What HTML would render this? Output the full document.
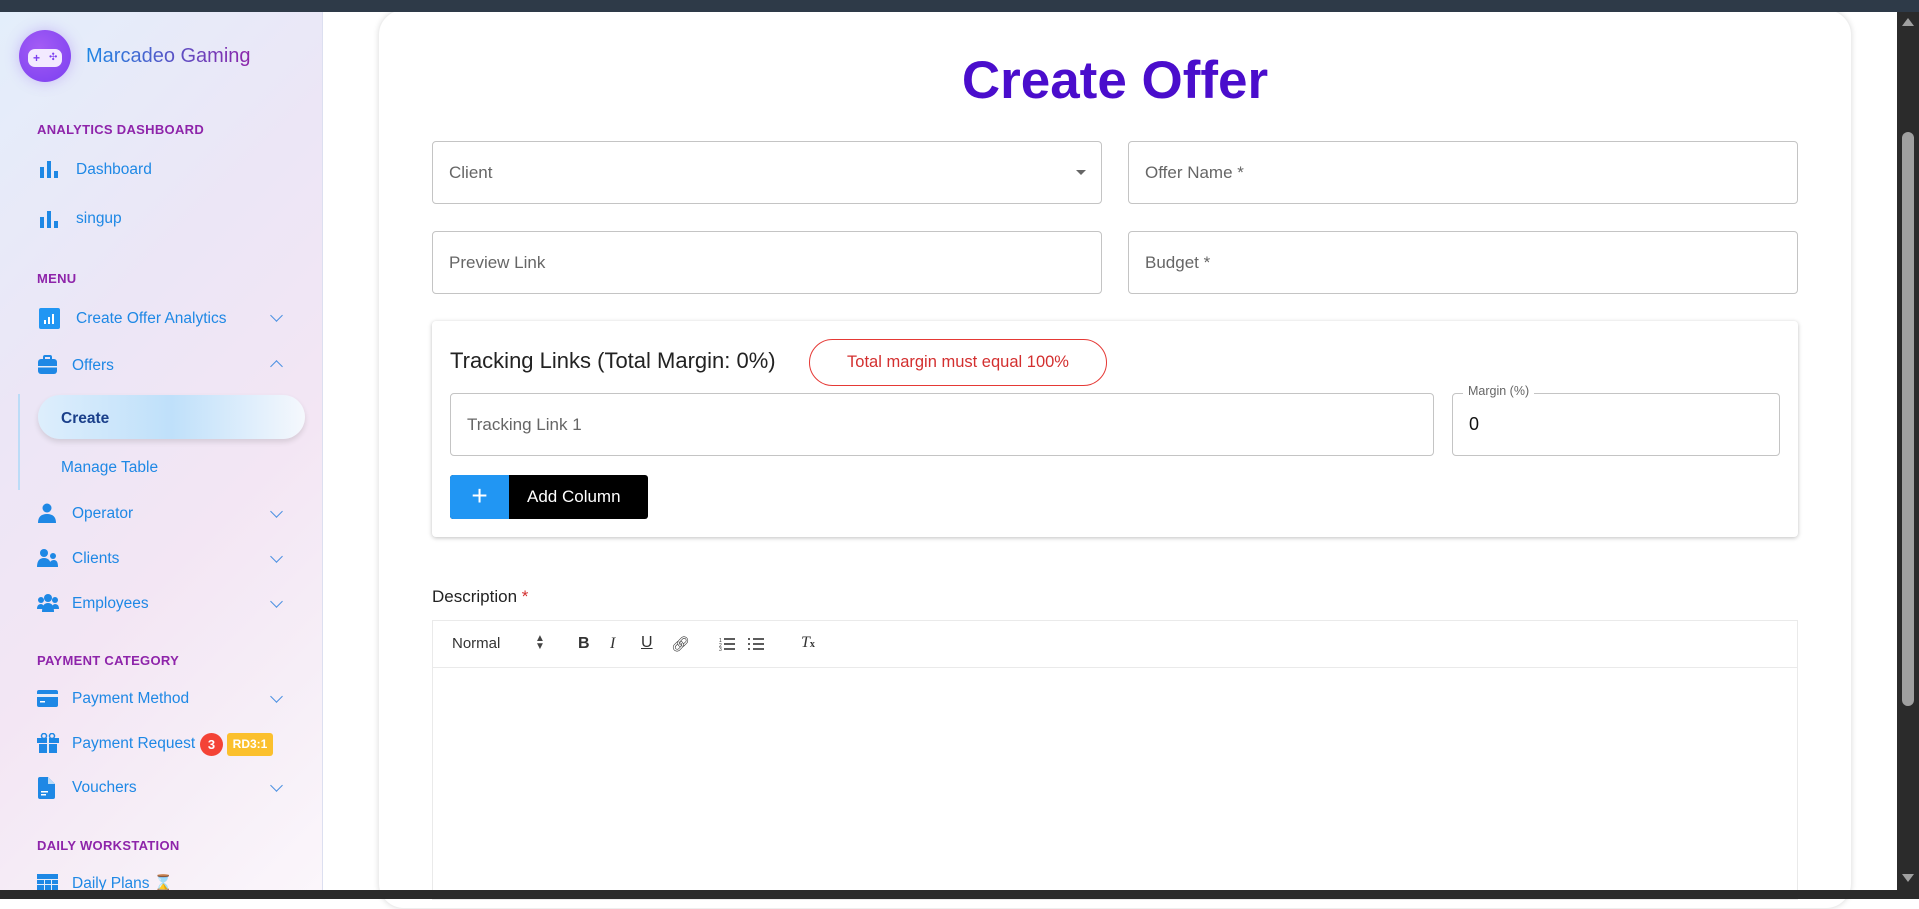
<!DOCTYPE html>
<html><head><meta charset="utf-8"><style>
*{box-sizing:border-box;margin:0;padding:0}
body{width:1919px;height:899px;overflow:hidden;position:relative;background:#fff;font-family:"Liberation Sans",Arial,sans-serif}
.a{position:absolute}
.topbar{left:0;top:0;width:1919px;height:12px;background:#2e3a48}
.botbar{left:0;top:890px;width:1919px;height:9px;background:#2b2b2b}
.side{left:0;top:12px;width:323px;height:878px;background:linear-gradient(135deg,#e3eefb 0%,#ece6f6 35%,#f3e6f4 60%,#f6eef7 80%,#fbf6fb 100%);border-right:1px solid #dcdff0}
.sec{left:37px;font-size:13px;font-weight:bold;color:#8e24aa;letter-spacing:.3px}
.it{font-size:15.5px;color:#1e88e5;font-weight:500;margin-top:2px}
.chev{width:9px;height:9px;border-right:1.5px solid #4a90e2;border-bottom:1.5px solid #4a90e2;transform:rotate(45deg)}
.card{left:378px;top:9px;width:1474px;height:900px;background:#fff;border-radius:26px;box-shadow:0 0 6px rgba(0,0,0,.12);border:1px solid #eee}
.fld{border:1px solid #c4c4c4;border-radius:4px;background:#fff}
.ph{font-size:17px;color:#666;position:absolute;left:16px;top:50%;transform:translateY(-50%)}
.scr{left:1897px;top:12px;width:22px;height:878px;background:#2b2b2b}
</style></head><body>
<div class="a side"></div>
<!-- logo -->
<div class="a" style="left:19px;top:30px;width:52px;height:52px;border-radius:50%;background:radial-gradient(circle at 40% 35%,#a35cf5,#7b3ff0);box-shadow:0 0 14px rgba(140,90,240,.35)"></div>
<div class="a" style="left:28px;top:49px;width:34px;height:18px;border-radius:7px;background:#f3eaff"></div>
<div class="a" style="left:33px;top:51px;font-size:12px;color:#7b3ff0;font-weight:bold">+</div>
<div class="a" style="left:49px;top:52px;font-size:10px;color:#7b3ff0">✣</div>
<div class="a" style="left:86px;top:45px;font-size:20px;font-weight:500;background:linear-gradient(90deg,#1e88e5,#8e24aa);-webkit-background-clip:text;color:transparent">Marcadeo Gaming</div>

<div class="a sec" style="top:122px">ANALYTICS DASHBOARD</div>
<svg class="a" style="left:39px;top:159px" width="20" height="19"><rect x="1" y="8" width="4" height="11" fill="#1e88e5"/><rect x="8" y="2" width="4" height="17" fill="#1e88e5"/><rect x="15" y="12" width="4" height="7" fill="#1e88e5"/></svg>
<div class="a it" style="left:76px;top:159px">Dashboard</div>
<svg class="a" style="left:39px;top:209px" width="20" height="19"><rect x="1" y="8" width="4" height="11" fill="#1e88e5"/><rect x="8" y="2" width="4" height="17" fill="#1e88e5"/><rect x="15" y="12" width="4" height="7" fill="#1e88e5"/></svg>
<div class="a it" style="left:76px;top:208px">singup</div>

<div class="a sec" style="top:271px">MENU</div>
<svg class="a" style="left:39px;top:308px" width="21" height="21"><rect width="21" height="21" rx="2" fill="#2196f3"/><rect x="5" y="12" width="2" height="4" fill="#fff"/><rect x="9" y="9" width="2" height="7" fill="#fff"/><rect x="13" y="6" width="2" height="10" fill="#fff"/></svg>
<div class="a it" style="left:76px;top:308px">Create Offer Analytics</div>
<div class="a chev" style="left:272px;top:311px"></div>
<svg class="a" style="left:37px;top:355px" width="21" height="20"><rect x="7" y="1" width="7" height="4" rx="1" fill="none" stroke="#1e88e5" stroke-width="2"/><rect x="1" y="4" width="19" height="15" rx="3" fill="#1e88e5"/><rect x="1" y="11" width="19" height="1.5" fill="#e6ecf8"/></svg>
<div class="a it" style="left:72px;top:355px">Offers</div>
<div class="a chev" style="left:272px;top:362px;transform:rotate(-135deg)"></div>
<div class="a" style="left:18px;top:394px;width:2px;height:96px;background:#bcdcf7"></div>
<div class="a" style="left:38px;top:395px;width:267px;height:44px;border-radius:22px;background:linear-gradient(90deg,#ddeefc,#bfe0fa 50%,#f5f8fd);box-shadow:0 3px 6px rgba(0,0,0,.12)"></div>
<div class="a" style="left:61px;top:410px;font-size:15.5px;font-weight:bold;color:#1a3f8a">Create</div>
<div class="a it" style="left:61px;top:457px">Manage Table</div>

<svg class="a" style="left:38px;top:503px" width="18" height="21"><circle cx="9" cy="5" r="4.5" fill="#1e88e5"/><path d="M0 20 Q0 11 9 11 Q18 11 18 20 Z" fill="#1e88e5"/></svg>
<div class="a it" style="left:72px;top:503px">Operator</div>
<div class="a chev" style="left:272px;top:507px"></div>
<svg class="a" style="left:37px;top:548px" width="22" height="20"><circle cx="7" cy="5" r="4" fill="#1e88e5"/><path d="M0 19 Q0 10 7 10 Q14 10 14 19Z" fill="#1e88e5"/><circle cx="16" cy="8" r="3" fill="#1e88e5"/><path d="M12 19 Q12 12 17 12 Q21 12 21 19Z" fill="#1e88e5"/></svg>
<div class="a it" style="left:72px;top:548px">Clients</div>
<div class="a chev" style="left:272px;top:552px"></div>
<svg class="a" style="left:37px;top:593px" width="22" height="20"><circle cx="11" cy="5" r="4" fill="#1e88e5"/><circle cx="4" cy="7" r="3" fill="#1e88e5"/><circle cx="18" cy="7" r="3" fill="#1e88e5"/><path d="M5 19 Q5 10 11 10 Q17 10 17 19Z" fill="#1e88e5"/><path d="M0 16 Q0 11 4 11 Q7 11 7 16Z" fill="#1e88e5"/><path d="M15 16 Q15 11 18 11 Q22 11 22 16Z" fill="#1e88e5"/></svg>
<div class="a it" style="left:72px;top:593px">Employees</div>
<div class="a chev" style="left:272px;top:597px"></div>

<div class="a sec" style="top:653px">PAYMENT CATEGORY</div>
<svg class="a" style="left:37px;top:690px" width="21" height="17"><rect width="21" height="17" rx="2" fill="#1e88e5"/><rect y="4" width="21" height="3" fill="#e6ecf8"/><rect x="3" y="11" width="5" height="1.5" fill="#fff"/></svg>
<div class="a it" style="left:72px;top:688px">Payment Method</div>
<div class="a chev" style="left:272px;top:692px"></div>
<svg class="a" style="left:37px;top:733px" width="22" height="20"><rect x="0" y="5" width="22" height="5" fill="#1e88e5"/><rect x="2" y="11" width="18" height="9" fill="#1e88e5"/><rect x="10" y="5" width="2" height="15" fill="#e6ecf8"/><circle cx="7" cy="3" r="2.5" fill="none" stroke="#1e88e5" stroke-width="1.5"/><circle cx="15" cy="3" r="2.5" fill="none" stroke="#1e88e5" stroke-width="1.5"/></svg>
<div class="a it" style="left:72px;top:733px">Payment Request</div>
<div class="a" style="left:200px;top:733px;width:23px;height:23px;border-radius:50%;background:#f44336;color:#fff;font-size:13px;font-weight:bold;text-align:center;line-height:23px">3</div>
<div class="a" style="left:227px;top:733px;width:46px;height:23px;border-radius:3px;background:#fbc02d;color:#fff;font-size:12px;font-weight:bold;text-align:center;line-height:23px">RD3:1</div>
<svg class="a" style="left:38px;top:777px" width="17" height="22"><path d="M0 2 Q0 0 2 0 L10 0 L17 7 L17 20 Q17 22 15 22 L2 22 Q0 22 0 20Z" fill="#1e88e5"/><path d="M10 0 L10 7 L17 7" fill="#bcdcf7"/><rect x="3" y="14" width="7" height="1.5" fill="#fff"/><rect x="3" y="17" width="5" height="1.5" fill="#fff"/></svg>
<div class="a it" style="left:72px;top:777px">Vouchers</div>
<div class="a chev" style="left:272px;top:781px"></div>

<div class="a sec" style="top:838px">DAILY WORKSTATION</div>
<svg class="a" style="left:37px;top:874px" width="21" height="16"><rect width="21" height="16" fill="#1e88e5"/><g fill="#e6ecf8"><rect x="0" y="5" width="21" height="1"/><rect x="0" y="10" width="21" height="1"/><rect x="7" y="5" width="1" height="11"/><rect x="14" y="5" width="1" height="11"/></g></svg>
<div class="a it" style="left:72px;top:872px">Daily Plans ⌛</div>

<!-- main card -->
<div class="a card"></div>
<div class="a" style="left:378px;top:50px;width:1474px;text-align:center;font-size:53px;font-weight:bold;color:#4a0dcc">Create Offer</div>

<div class="a fld" style="left:432px;top:141px;width:670px;height:63px"><span class="ph">Client</span><span style="position:absolute;right:15px;top:28px;border-left:5px solid transparent;border-right:5px solid transparent;border-top:5px solid #666"></span></div>
<div class="a fld" style="left:1128px;top:141px;width:670px;height:63px"><span class="ph">Offer Name *</span></div>
<div class="a fld" style="left:432px;top:231px;width:670px;height:63px"><span class="ph">Preview Link</span></div>
<div class="a fld" style="left:1128px;top:231px;width:670px;height:63px"><span class="ph">Budget *</span></div>

<div class="a" style="left:432px;top:321px;width:1366px;height:216px;background:#fff;border-radius:4px;box-shadow:0 1px 4px rgba(0,0,0,.25)"></div>
<div class="a" style="left:450px;top:348px;font-size:22px;font-weight:500;color:#222">Tracking Links (Total Margin: 0%)</div>
<div class="a" style="left:809px;top:339px;width:298px;height:47px;border:1.5px solid #e53935;border-radius:24px;color:#d32f2f;font-size:16.5px;font-weight:500;text-align:center;line-height:44px">Total margin must equal 100%</div>
<div class="a fld" style="left:450px;top:393px;width:984px;height:63px"><span class="ph">Tracking Link 1</span></div>
<div class="a fld" style="left:1452px;top:393px;width:328px;height:63px"><span style="position:absolute;left:16px;top:20px;font-size:18px;color:#111">0</span></div>
<div class="a" style="left:1463px;top:384px;padding:0 5px;background:#fff;font-size:12.5px;color:#666">Margin (%)</div>
<div class="a" style="left:450px;top:475px;width:198px;height:44px;border-radius:3px;background:#000;overflow:hidden">
 <div style="position:absolute;left:0;top:0;width:59px;height:44px;background:#2196f3;color:#fff;font-size:28px;text-align:center;line-height:42px">+</div>
 <div style="position:absolute;left:77px;top:12px;color:#fff;font-size:17px;font-weight:500">Add Column</div>
</div>

<div class="a" style="left:432px;top:587px;font-size:17px;color:#222">Description <span style="color:#d32f2f">*</span></div>
<div class="a" style="left:432px;top:620px;width:1366px;height:280px;border:1px solid #eaeaea"></div>
<div class="a" style="left:432px;top:667px;width:1366px;height:1px;background:#eaeaea"></div>
<div class="a" style="left:452px;top:635px;font-size:15px;color:#333">Normal</div>
<div class="a" style="left:535px;top:635px;font-size:10px;color:#444;line-height:8px">▲<br>▼</div>
<div class="a" style="left:578px;top:635px;font-size:16px;font-weight:bold;color:#333">B</div>
<div class="a" style="left:610px;top:635px;font-size:16px;font-style:italic;color:#333;font-family:'Liberation Serif',serif">I</div>
<div class="a" style="left:641px;top:634px;font-size:16px;text-decoration:underline;color:#333">U</div>
<div class="a" style="left:671px;top:635px;font-size:15px;color:#333">🔗︎</div>
<svg class="a" style="left:719px;top:637px" width="16" height="14"><g stroke="#333" stroke-width="1.6"><line x1="5" y1="2" x2="16" y2="2"/><line x1="5" y1="7" x2="16" y2="7"/><line x1="5" y1="12" x2="16" y2="12"/></g><text x="0" y="5" font-size="5" fill="#333">1</text><text x="0" y="10" font-size="5" fill="#333">2</text><text x="0" y="14" font-size="5" fill="#333">3</text></svg>
<svg class="a" style="left:748px;top:637px" width="16" height="14"><g stroke="#333" stroke-width="1.6"><line x1="5" y1="2" x2="16" y2="2"/><line x1="5" y1="7" x2="16" y2="7"/><line x1="5" y1="12" x2="16" y2="12"/><line x1="0" y1="2" x2="2" y2="2"/><line x1="0" y1="7" x2="2" y2="7"/><line x1="0" y1="12" x2="2" y2="12"/></g></svg>
<div class="a" style="left:801px;top:634px;font-size:16px;font-style:italic;color:#333;font-family:'Liberation Serif',serif">T<span style="font-size:10px;font-style:normal;font-weight:bold">x</span></div>

<!-- scrollbar -->
<div class="a scr"></div>
<div class="a" style="left:1902px;top:18px;border-left:6px solid transparent;border-right:6px solid transparent;border-bottom:8px solid #a0a0a0"></div>
<div class="a" style="left:1902px;top:132px;width:12px;height:574px;border-radius:6px;background:#a0a0a0"></div>
<div class="a" style="left:1902px;top:874px;border-left:6px solid transparent;border-right:6px solid transparent;border-top:8px solid #a0a0a0"></div>
<div class="a topbar"></div>
<div class="a botbar"></div>
</body></html>
